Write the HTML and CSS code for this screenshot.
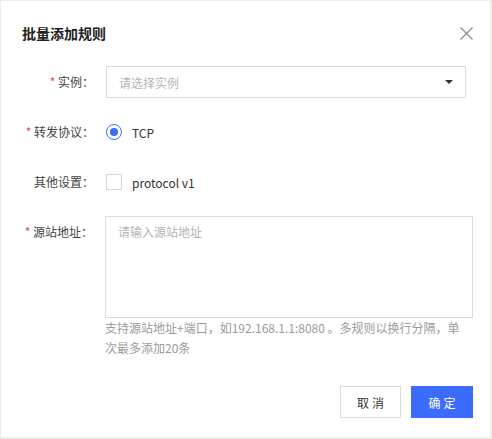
FILE: index.html
```html
<!DOCTYPE html>
<html lang="zh-CN">
<head>
<meta charset="utf-8">
<title>批量添加规则</title>
<link rel="stylesheet" href="styles.css">
</head>
<body>
<div class="dialog">
  <div class="header">
    <h1 class="title">批量添加规则</h1>
    <button class="close" aria-label="关闭">
      <svg width="13" height="13" viewBox="0 0 13 13"><path d="M0.5 0.5L12.5 12.5M12.5 0.5L0.5 12.5" stroke="#8a8a8a" stroke-width="1.2" fill="none"/></svg>
    </button>
  </div>
  <div class="form">
    <div class="row">
      <div class="label"><span class="req">*</span> 实例：</div>
      <div class="control">
        <div class="select">
          <span class="placeholder">请选择实例</span>
          <span class="caret"></span>
        </div>
      </div>
    </div>
    <div class="row">
      <div class="label"><span class="req">*</span> 转发协议：</div>
      <div class="control">
        <span class="radio"><span class="dot"></span></span>
        <span class="opt">TCP</span>
      </div>
    </div>
    <div class="row">
      <div class="label">其他设置：</div>
      <div class="control">
        <span class="checkbox"></span>
        <span class="opt">protocol v1</span>
      </div>
    </div>
    <div class="row top">
      <div class="label"><span class="req">*</span> 源站地址：</div>
      <div class="control col">
        <div class="textarea"><span class="placeholder">请输入源站地址</span></div>
        <div class="help">支持源站地址+端口，如192.168.1.1:8080 。多规则以换行分隔，单次最多添加20条</div>
      </div>
    </div>
  </div>
  <div class="footer">
    <button class="btn">取消</button>
    <button class="btn primary">确定</button>
  </div>
</div>
</body>
</html>
```
FILE: styles.css
```css
* { box-sizing: border-box; }
html, body { margin: 0; padding: 0; }
body {
  background: #efeee5;
  width: 492px;
  height: 439px;
  font-family: "Noto Sans CJK SC", "Noto Sans", sans-serif;
  font-size: 12px;
  color: #333;
  padding: 1px 2px 2px 1px;
}
.dialog {
  background: #fff;
  width: 489px;
  height: 436px;
  padding: 22px 17px 0 21px;
}
.header {
  display: flex;
  justify-content: space-between;
  align-items: center;
  height: 20px;
}
.title {
  margin: 0;
  font-size: 14px;
  font-weight: 700;
  line-height: 20px;
  color: #222;
}
.close {
  border: 0;
  background: none;
  padding: 0;
  width: 13px;
  height: 13px;
  display: flex;
  margin-top: 1px;
}
.form {
  margin-top: 23px;
  display: flex;
  flex-direction: column;
  gap: 18px;
}
.row {
  display: flex;
  align-items: center;
  min-height: 32px;
}
.row.top { align-items: flex-start; }
.label {
  width: 84px;
  padding-right: 12px;
  text-align: right;
  line-height: 32px;
  color: #444;
  white-space: nowrap;
}
.req { color: #e5484d; }
.control {
  display: flex;
  align-items: center;
}
.control.col {
  flex-direction: column;
  align-items: flex-start;
}
.select {
  width: 360px;
  height: 32px;
  border: 1px solid #dcdcdc;
  display: flex;
  align-items: center;
  justify-content: space-between;
  padding: 0 12px 0 12px;
}
.placeholder { color: #b4b4b4; }
.caret {
  width: 0;
  height: 0;
  border-left: 4px solid transparent;
  border-right: 4px solid transparent;
  border-top: 4px solid #333;
}
.radio {
  width: 16px;
  height: 16px;
  border: 1px solid #3c6cfe;
  border-radius: 50%;
  display: flex;
  align-items: center;
  justify-content: center;
}
.dot {
  width: 8px;
  height: 8px;
  border-radius: 50%;
  background: #3c6cfe;
}
.checkbox {
  width: 16px;
  height: 16px;
  border: 1px solid #d6d6d6;
}
.opt {
  margin-left: 10px;
  color: #333;
}
.textarea {
  width: 368px;
  height: 102px;
  border: 1px solid #dcdcdc;
  padding: 6px 12px;
  line-height: 18px;
}
.help {
  width: 362px;
  color: #9a9a9a;
  line-height: 20px;
}
.footer {
  margin-top: 28px;
  display: flex;
  justify-content: flex-end;
  gap: 10px;
}
.btn {
  font-family: inherit;
  font-size: 12px;
  width: 61px;
  height: 32px;
  border: 1px solid #dcdcdc;
  background: #fff;
  color: #333;
  letter-spacing: 3px;
  text-indent: 3px;
  padding: 0;
}
.btn.primary {
  width: 62px;
  background: #3c6cfe;
  border-color: #3c6cfe;
  color: #fff;
}
```
